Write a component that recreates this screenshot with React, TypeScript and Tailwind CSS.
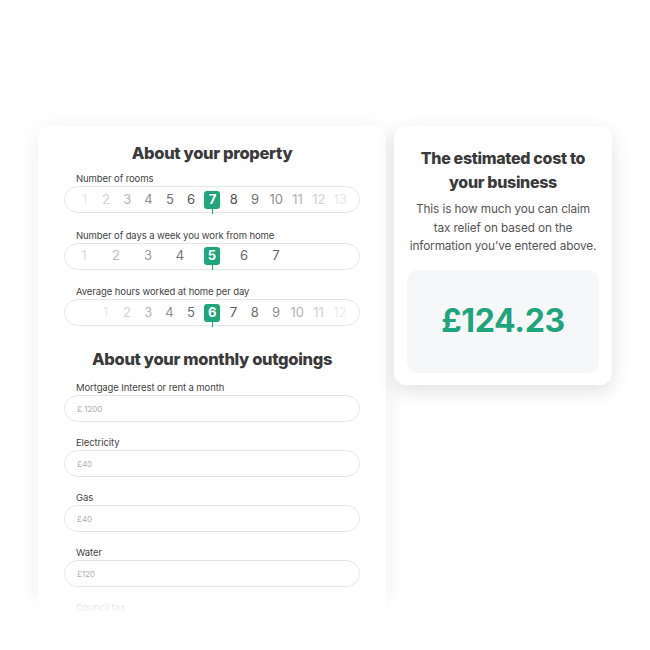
import React from 'react';

// colour ramps for the picker digits, by distance from the selected value
const roomsColors = [
  'text-[#e8e8e8]', 'text-[#d2d2d2]', 'text-[#b4b4b4]', 'text-[#8f8f8f]', 'text-[#707070]', 'text-[#555555]',
  '',
  'text-[#555555]', 'text-[#707070]', 'text-[#8f8f8f]', 'text-[#b4b4b4]', 'text-[#d2d2d2]', 'text-[#e8e8e8]',
];
const daysColors = [
  'text-[#dcdcdc]', 'text-[#bdbdbd]', 'text-[#9a9a9a]', 'text-[#777777]', '', 'text-[#666666]', 'text-[#666666]',
];
const hoursColors = [
  'text-[#e8e8e8]', 'text-[#d2d2d2]', 'text-[#b4b4b4]', 'text-[#8f8f8f]', 'text-[#707070]',
  '',
  'text-[#555555]', 'text-[#707070]', 'text-[#8f8f8f]', 'text-[#b4b4b4]', 'text-[#d2d2d2]', 'text-[#ececec]',
];

interface PickerProps {
  label: string;
  values: number[];
  selected: number;
  colors: string[];
  cellClass: string;
  padClass: string;
}

function Picker({ label, values, selected, colors, cellClass, padClass }: PickerProps) {
  return (
    <div>
      <p className="pl-3 text-[9.5px] leading-[15px] tracking-[-0.01em] text-[#444]">{label}</p>
      <div className={`flex h-[27px] items-center rounded-full border border-[#e6e6e6] ${padClass}`}>
        {values.map((v, i) => (
          <div key={v} className={`flex h-full items-center justify-center ${cellClass}`}>
            {v === selected ? (
              <span className="relative flex h-[18px] w-4 items-center justify-center rounded-[3px] bg-[#1fa57b] text-[13px] font-bold text-white">
                {v}
                <span className="absolute left-1/2 top-full h-[5px] w-px bg-[#1fa57b]" />
              </span>
            ) : (
              <span className={`text-[13px] ${colors[i]}`}>{v}</span>
            )}
          </div>
        ))}
      </div>
    </div>
  );
}

function MoneyField({ label, placeholder }: { label: string; placeholder: string }) {
  return (
    <div>
      <p className="pl-3 text-[9.5px] leading-[15px] tracking-[-0.01em] text-[#444]">{label}</p>
      <div className="flex h-[27px] items-center rounded-full border border-[#e6e6e6] pl-3">
        <span className="text-[8px] text-[#b0b0b0]">{placeholder}</span>
      </div>
    </div>
  );
}

export default function App() {
  const range = (n: number) => Array.from({ length: n }, (_, i) => i + 1);

  return (
    <div
      className="relative h-[650px] w-[650px] overflow-hidden bg-white"
      style={{ fontFamily: 'Inter, "Noto Sans", sans-serif' }}
    >
      <div className="flex items-start gap-2 pl-[38px] pt-[126px]">
        {/* Calculator form */}
        <div className="w-[348px] rounded-xl bg-white px-[26px] pb-10 pt-[16px] shadow-[0_4px_24px_rgba(0,0,0,0.08)]">
          <h2 className="text-center text-[16.5px] font-extrabold leading-[22px] tracking-[-0.02em] text-[#3a3a3a]">
            About your property
          </h2>

          <div className="mt-[7px] flex flex-col gap-[14.5px]">
            <Picker
              label="Number of rooms"
              values={range(13)}
              selected={7}
              colors={roomsColors}
              cellClass="w-[21.3px]"
              padClass="pl-[9px]"
            />
            <Picker
              label="Number of days a week you work from home"
              values={range(7)}
              selected={5}
              colors={daysColors}
              cellClass="w-8"
              padClass="pl-[3px]"
            />
            <Picker
              label="Average hours worked at home per day"
              values={range(12)}
              selected={6}
              colors={hoursColors}
              cellClass="w-[21.3px]"
              padClass="pl-[30px]"
            />
          </div>

          <h2 className="mt-[22px] text-center text-[16.5px] font-extrabold leading-[22px] tracking-[-0.02em] text-[#3a3a3a]">
            About your monthly outgoings
          </h2>

          <div className="mt-[10px] flex flex-col gap-[13px]">
            <MoneyField label="Mortgage Interest or rent a month" placeholder="£ 1200" />
            <MoneyField label="Electricity" placeholder="£40" />
            <MoneyField label="Gas" placeholder="£40" />
            <MoneyField label="Water" placeholder="£120" />
            <MoneyField label="Council tax" placeholder="£100" />
          </div>
        </div>

        {/* Result */}
        <div className="flex h-[259px] w-[218px] flex-col items-center rounded-xl bg-white px-[13px] pb-3 pt-[20px] shadow-[0_6px_20px_rgba(0,0,0,0.12)]">
          <h3 className="text-center text-[16px] font-extrabold leading-[24px] tracking-[-0.02em] text-[#3a3a3a]">
            The estimated cost to
            <br />
            your business
          </h3>
          <p className="mt-[6px] text-center text-[11.8px] leading-[18.5px] tracking-[-0.01em] text-[#555]">
            This is how much you can claim tax relief on based on the information you’ve entered above.
          </p>
          <div className="mt-[14px] flex w-full flex-1 items-center justify-center rounded-[10px] bg-[#f6f7f9]">
            <span className="text-[32px] font-bold tracking-[-0.01em] text-[#1fa57b]">£124.23</span>
          </div>
        </div>
      </div>

      {/* fade out the bottom of the form */}
      <div className="absolute inset-x-0 bottom-0 top-[589px] bg-[linear-gradient(to_bottom,rgba(255,255,255,0)_0px,rgba(255,255,255,0.85)_16px,#ffffff_28px)]" />
    </div>
  );
}
